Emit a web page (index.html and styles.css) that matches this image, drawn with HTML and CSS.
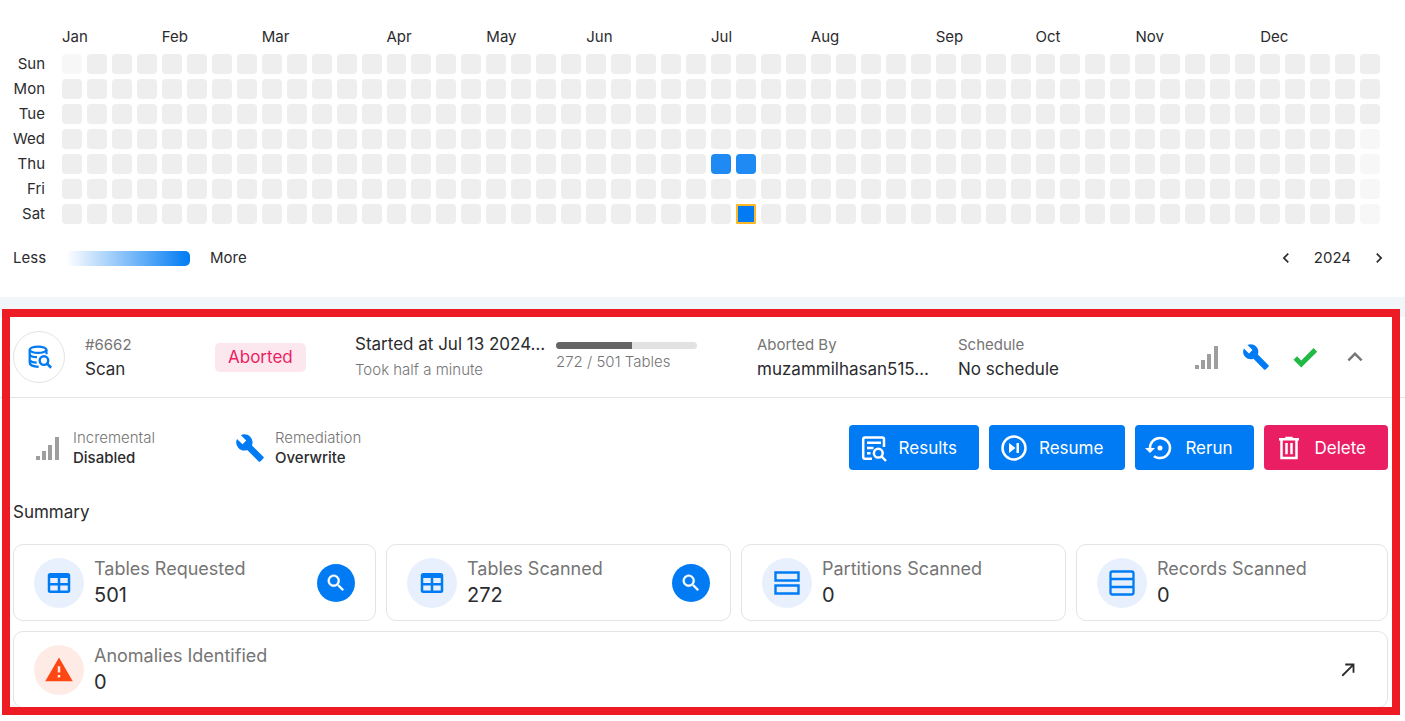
FILE: index.html
```html
<!DOCTYPE html>
<html lang="en">
<head>
<meta charset="utf-8">
<title>Activity</title>
<link rel="stylesheet" href="styles.css">
</head>
<body>
<svg class="sprite" aria-hidden="true">
  <symbol id="table" viewBox="0 0 24 24"><path d="M5,4H19A2,2 0 0,1 21,6V18A2,2 0 0,1 19,20H5A2,2 0 0,1 3,18V6A2,2 0 0,1 5,4M5,8V12H11V8H5M13,8V12H19V8H13M5,14V18H11V14H5M13,14V18H19V14H13Z"/></symbol>
  <symbol id="magnify" viewBox="0 0 24 24"><path d="M9.5,3A6.5,6.5 0 0,1 16,9.5C16,11.11 15.41,12.59 14.44,13.73L14.71,14H15.5L20.5,19L19,20.5L14,15.5V14.71L13.73,14.44C12.59,15.41 11.11,16 9.5,16A6.5,6.5 0 0,1 3,9.5A6.5,6.5 0 0,1 9.5,3M9.5,5C7,5 5,7 5,9.5C5,12 7,14 9.5,14C12,14 14,12 14,9.5C14,7 12,5 9.5,5Z" stroke="currentColor" stroke-width=".5"/></symbol>
  <symbol id="alert" viewBox="0 0 24 24"><path d="M13 14H11V9H13M13 18H11V16H13M1 21H23L12 2L1 21Z"/></symbol>
  <symbol id="wrench" viewBox="0 0 24 24"><path d="M22.7,19L13.6,9.9C14.5,7.6 14,4.9 12.1,3C10.1,1 7.1,0.6 4.7,1.7L9,6L6,9L1.6,4.7C0.4,7.1 0.9,10.1 2.9,12.1C4.8,14 7.5,14.5 9.8,13.6L18.9,22.7C19.3,23.1 19.9,23.1 20.3,22.7L22.6,20.4C23.1,20 23.1,19.3 22.7,19Z"/></symbol>
  <symbol id="trash" viewBox="0 0 24 24"><path d="M9,3V4H4V6H5V21H19V6H20V4H15V3H9M7,6H17V19H7V6M9,8V17H11V8H9M13,8V17H15V8H13Z"/></symbol>
  <symbol id="restore" viewBox="0 0 24 24"><path d="M12,3A9,9 0 0,0 3,12H0L4,16L8,12H5A7,7 0 0,1 12,5A7,7 0 0,1 19,12A7,7 0 0,1 12,19C10.5,19 9.09,18.5 7.94,17.7L6.5,19.14C8.04,20.3 9.94,21 12,21A9,9 0 0,0 21,12A9,9 0 0,0 12,3M14,12A2,2 0 0,0 12,10A2,2 0 0,0 10,12A2,2 0 0,0 12,14A2,2 0 0,0 14,12Z"/></symbol>
  <symbol id="resume" viewBox="0 0 24 24"><circle cx="12" cy="12" r="9.2" fill="none" stroke="currentColor" stroke-width="2"/><path d="M8,8V16L13.2,12ZM14,8H16V16H14Z"/></symbol>
  <symbol id="check" viewBox="0 0 24 24"><path d="M9,20.42L2.79,14.21L5.62,11.38L9,14.77L18.88,4.88L21.71,7.71L9,20.42Z"/></symbol>
  <symbol id="up" viewBox="0 0 24 24"><path d="M7.41,15.41L12,10.83L16.59,15.41L18,14L12,8L6,14L7.41,15.41Z"/></symbol>
  <symbol id="left" viewBox="0 0 24 24"><path d="M15.41,16.58L10.83,12L15.41,7.41L14,6L8,12L14,18L15.41,16.58Z"/></symbol>
  <symbol id="right" viewBox="0 0 24 24"><path d="M8.59,16.58L13.17,12L8.59,7.41L10,6L16,12L10,18L8.59,16.58Z"/></symbol>
  <symbol id="open" viewBox="0 0 24 24"><path d="M5,17.59L15.59,7H9V5H19V15H17V8.41L6.41,19L5,17.59Z"/></symbol>
  <symbol id="signal" viewBox="0 0 30 30"><path d="M3,23H7V27H3ZM9,18H13V27H9ZM15,12H19V27H15ZM22,4H26V27H22Z"/></symbol>
  <symbol id="partitions" viewBox="0 0 30 30"><path d="M3.5,4.5H26.5V12.5H3.5ZM3.5,17.5H26.5V25.5H3.5Z" fill="none" stroke="currentColor" stroke-width="2.4"/></symbol>
  <symbol id="records" viewBox="0 0 30 30"><path d="M5.5,3.5H24.5Q26.5,3.5 26.5,5.5V24.5Q26.5,26.5 24.5,26.5H5.5Q3.5,26.5 3.5,24.5V5.5Q3.5,3.5 5.5,3.5ZM3.5,11H26.5M3.5,19H26.5" fill="none" stroke="currentColor" stroke-width="2.3"/></symbol>
  <symbol id="db" viewBox="0 0 30 30"><g fill="none" stroke="currentColor" stroke-width="2.4"><ellipse cx="14" cy="7.2" rx="9" ry="3.4"/><path d="M5,7.2V21C5,23.5 9,25.4 14.6,25.6M23,7.2V12M5,12.5C6.3,14.6 9.5,15.3 12.8,15.2M5,18.4C6.5,20.2 9,20.8 12.5,20.9"/><circle cx="20.3" cy="18.8" r="4.6" stroke-width="2.6"/><path d="M23.6,22.1L28,26.5" stroke-width="2.8"/></g></symbol>
  <symbol id="results" viewBox="0 0 30 30"><g fill="none" stroke="currentColor" stroke-width="2.5"><path d="M13,25.8H6Q4.2,25.8 4.2,24V6.3Q4.2,4.5 6,4.5H23.2Q25,4.5 25,6.3V14M8,9.7H22M8,15H14.5M8,20.3H11.5"/><circle cx="19.3" cy="20.2" r="4.4"/><path d="M22.5,23.4L27,28"/></g></symbol>
</svg>

<section class="activity">
  <div class="heatmap" id="heatmap"></div>
  <div class="legend">
    <span>Less</span><span class="scale"></span><span>More</span>
    <div class="years">
      <button class="plain" aria-label="Previous year"><svg class="i20"><use href="#left"/></svg></button>
      <span>2024</span>
      <button class="plain" aria-label="Next year"><svg class="i20"><use href="#right"/></svg></button>
    </div>
  </div>
</section>

<section class="run">
  <header class="run-head">
    <span class="avatar"><svg class="i28"><use href="#db"/></svg></span>
    <div><p class="caption">#6662</p><p class="value">Scan</p></div>
    <div><span class="badge">Aborted</span></div>
    <div><p class="value">Started at Jul 13 2024…</p><p class="caption light">Took half a minute</p></div>
    <div class="progress"><div class="track"><div class="fill" style="width:54%"></div></div><p class="caption light">272 / 501 Tables</p></div>
    <div><p class="caption">Aborted By</p><p class="value">muzammilhasan515…</p></div>
    <div><p class="caption">Schedule</p><p class="value">No schedule</p></div>
    <div class="state">
      <svg class="i30 grey"><use href="#signal"/></svg>
      <svg class="i28 blue"><use href="#wrench"/></svg>
      <svg class="i30 green"><use href="#check"/></svg>
      <button class="plain" aria-label="Collapse"><svg class="i30 dim"><use href="#up"/></svg></button>
    </div>
  </header>

  <div class="body">
    <div class="toolbar">
      <div class="option"><svg class="i30 grey"><use href="#signal"/></svg><div><p class="light">Incremental</p><p class="strong">Disabled</p></div></div>
      <div class="option"><svg class="i30 blue"><use href="#wrench"/></svg><div><p class="light">Remediation</p><p class="strong">Overwrite</p></div></div>
      <div class="actions">
        <button class="btn"><svg class="i30"><use href="#results"/></svg>Results</button>
        <button class="btn"><svg class="i30"><use href="#resume"/></svg>Resume</button>
        <button class="btn"><svg class="i30"><use href="#restore"/></svg>Rerun</button>
        <button class="btn danger"><svg class="i30"><use href="#trash"/></svg>Delete</button>
      </div>
    </div>
    <h2>Summary</h2>
    <div class="cards">
      <article class="card"><span class="disc"><svg class="i30"><use href="#table"/></svg></span><div class="stat"><h3>Tables Requested</h3><p>501</p></div><button class="round" aria-label="View requested tables"><svg class="i22"><use href="#magnify"/></svg></button></article>
      <article class="card"><span class="disc"><svg class="i30"><use href="#table"/></svg></span><div class="stat"><h3>Tables Scanned</h3><p>272</p></div><button class="round" aria-label="View scanned tables"><svg class="i22"><use href="#magnify"/></svg></button></article>
      <article class="card"><span class="disc"><svg class="i30"><use href="#partitions"/></svg></span><div class="stat"><h3>Partitions Scanned</h3><p>0</p></div></article>
      <article class="card"><span class="disc"><svg class="i30"><use href="#records"/></svg></span><div class="stat"><h3>Records Scanned</h3><p>0</p></div></article>
      <article class="card wide"><span class="disc warn"><svg class="i30"><use href="#alert"/></svg></span><div class="stat"><h3>Anomalies Identified</h3><p>0</p></div><button class="plain open" aria-label="Open anomalies"><svg class="i22"><use href="#open"/></svg></button></article>
    </div>
  </div>
  <div class="frame"></div>
</section>
<script src="heatmap.js"></script>
</body>
</html>
```
FILE: styles.css
```css
* { box-sizing: border-box; }
body { margin: 0; background: #f0f6fa; color: #2b2b2e; font: 15px/20px Inter, "Open Sans", sans-serif; }
p, h2, h3 { margin: 0; font-weight: 400; }
button { font: inherit; border: 0; padding: 0; cursor: pointer; }
svg { display: block; flex: none; fill: currentColor; }
.sprite { position: absolute; width: 0; height: 0; }
.i20 { width: 20px; height: 20px; }
.i22 { width: 22px; height: 22px; }
.i28 { width: 28px; height: 28px; }
.i30 { width: 30px; height: 30px; }
.blue { color: #007bf3; }
.green { color: #21ba45; }
.grey { color: #9e9e9e; }
.dim { color: #757575; }
.plain { background: none; color: inherit; }

.activity { background: #fff; padding: 27px 25px 28px 13px; }
.heatmap { display: grid; grid-template-columns: 44px repeat(53, minmax(0, 1fr)); grid-template-rows: 22px repeat(7, 20px); gap: 5px; }
.day { padding-right: 12px; text-align: right; }
.month { white-space: nowrap; width: 0; }
.cell { background: #eee; border-radius: 4px; }
.cell.out { background: #f7f7f7; }
.cell.mid { background: #1f8af4; }
.cell.top { background: #007bf3; border: 2px solid #fdb827; border-radius: 1px; }
.legend { display: flex; align-items: center; gap: 20px; margin-top: 23px; height: 22px; }
.scale { width: 124px; height: 15px; border-radius: 5px; background: linear-gradient(90deg, #fff, #007bf3); }
.years { display: flex; align-items: center; gap: 18px; margin-left: auto; margin-right: -9px; }

.run { position: relative; margin-top: 20px; background: #fff; }
.run-head { display: grid; grid-template-columns: 72px 130px 140px 201fr 201fr 201fr 234fr 173px; align-items: center; height: 81px; padding-left: 13px; padding-right: 40px; border-bottom: 1px solid #e4e4e4; }
.run-head > div { min-width: 0; }
.run-head p { white-space: nowrap; }
.avatar { width: 52px; height: 52px; display: grid; place-items: center; border: 1px solid #e4e4e4; border-radius: 50%; color: #007bf3; }
.caption { font-size: 15px; line-height: 25px; color: #757575; }
.value { font-size: 17px; line-height: 25px; }
.light { font-weight: 300; color: #757575; }
.badge { display: inline-block; padding: 0 13px; border-radius: 5px; background: #fde7ee; color: #e91e63; font-size: 17px; line-height: 29px; }
.track { height: 7px; width: 141px; border-radius: 4px; background: #e2e2e2; overflow: hidden; margin-top: 2px; }
.fill { height: 100%; background: #646464; }
.run-head .state { display: flex; align-items: center; gap: 20px; }

.body { padding: 27px 17px 13px 13px; }
.toolbar { display: flex; align-items: center; }
.option { display: flex; align-items: center; gap: 10px; width: 202px; padding-left: 20px; }
.strong { font-weight: 500; }
.actions { display: flex; gap: 10px; margin-left: auto; }
.btn { display: flex; align-items: center; gap: 10px; height: 45px; padding: 0 22px 0 10px; border-radius: 4px; background: #007bf3; color: #fff; font-size: 17px; }
.danger { background: #e91e63; }
h2 { margin: 30px 0 20px; font-size: 17px; line-height: 24px; }
.cards { display: grid; grid-template-columns: 363fr 345fr 325fr 312fr; gap: 10px; }
.card { display: flex; align-items: center; gap: 10px; height: 77px; padding: 0 20px; border: 1px solid #e4e4e4; border-radius: 10px; }
.wide { grid-column: 1 / -1; }
.disc { width: 50px; height: 50px; flex: none; display: grid; place-items: center; border-radius: 50%; background: #e8f0fd; color: #007bf3; }
.warn { background: #ffebe6; color: #ff4713; }
.stat { flex: 1; padding-bottom: 2px; }
h3 { font-size: 18px; line-height: 27px; color: #757575; white-space: nowrap; }
.stat p { font-size: 20px; line-height: 27px; }
.round { width: 38px; height: 38px; display: grid; place-items: center; border-radius: 50%; background: #007bf3; color: #fff; }
.open { margin-right: 8px; }
.frame { position: absolute; inset: -8px 5px 6px 2px; border: 8px solid #ed1c24; pointer-events: none; }
```
FILE: heatmap.js
```javascript
const map = document.getElementById("heatmap");
const months = { Jan: 0, Feb: 4, Mar: 8, Apr: 13, May: 17, Jun: 21, Jul: 26, Aug: 30, Sep: 35, Oct: 39, Nov: 43, Dec: 48 };
const days = ["Sun", "Mon", "Tue", "Wed", "Thu", "Fri", "Sat"];
const levels = { "26-4": "mid", "27-4": "mid", "27-6": "top" };

function add(text, cls, col, row) {
  const el = document.createElement("span");
  el.className = cls;
  el.textContent = text;
  el.style.gridArea = `${row} / ${col}`;
  map.append(el);
}

for (const [name, week] of Object.entries(months)) add(name, "month", week + 2, 1);
days.forEach((name, d) => {
  add(name, "day", 1, d + 2);
  for (let w = 0; w < 53; w++) {
    const outside = (w === 0 && d < 1) || (w === 52 && d > 2);
    add("", "cell " + (outside ? "out" : levels[`${w}-${d}`] || ""), w + 2, d + 2);
  }
});
```
